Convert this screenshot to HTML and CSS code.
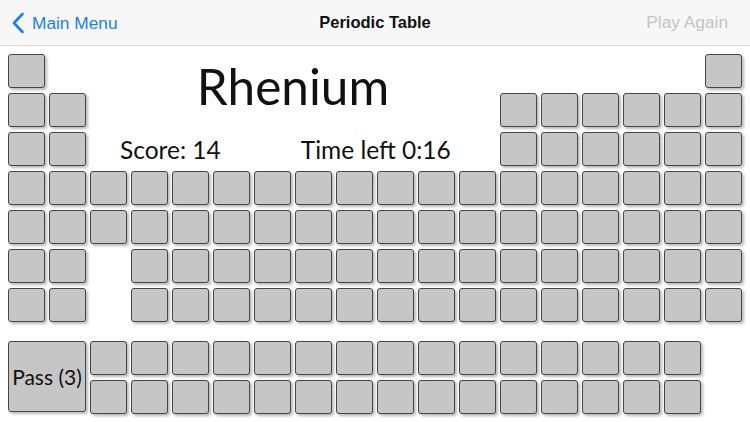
FILE: index.html
```html
<!DOCTYPE html>
<html>
<head>
<meta charset="utf-8">
<link rel="stylesheet" href="styles.css">
</head>
<body>
<header class="nav">
  <a class="nav-back"><svg class="chev" width="14" height="22" viewBox="0 0 14 22"><path d="M11.5 2 L3 11 L11.5 20" fill="none" stroke="#1a80f0" stroke-width="2.6" stroke-linecap="round" stroke-linejoin="round"/></svg><span>Main Menu</span></a>
  <div class="nav-title">Periodic Table</div>
  <a class="nav-action">Play Again</a>
</header>
<main class="board">
  <div class="element-name">Rhenium</div>
  <div class="stats"><span>Score: 14</span><span>Time left 0:16</span></div>
  <button class="pass">Pass (3)</button>

  <!-- row 1 -->
  <div class="cell"></div><div class="cell c18"></div>
  <!-- row 2 -->
  <div class="cell"></div><div class="cell"></div>
  <div class="cell c13"></div><div class="cell"></div><div class="cell"></div><div class="cell"></div><div class="cell"></div><div class="cell"></div>
  <!-- row 3 -->
  <div class="cell"></div><div class="cell"></div>
  <div class="cell c13"></div><div class="cell"></div><div class="cell"></div><div class="cell"></div><div class="cell"></div><div class="cell"></div>
  <!-- row 4 -->
  <div class="cell"></div><div class="cell"></div><div class="cell"></div><div class="cell"></div><div class="cell"></div><div class="cell"></div>
  <div class="cell"></div><div class="cell"></div><div class="cell"></div><div class="cell"></div><div class="cell"></div><div class="cell"></div>
  <div class="cell"></div><div class="cell"></div><div class="cell"></div><div class="cell"></div><div class="cell"></div><div class="cell"></div>
  <!-- row 5 -->
  <div class="cell"></div><div class="cell"></div><div class="cell"></div><div class="cell"></div><div class="cell"></div><div class="cell"></div>
  <div class="cell"></div><div class="cell"></div><div class="cell"></div><div class="cell"></div><div class="cell"></div><div class="cell"></div>
  <div class="cell"></div><div class="cell"></div><div class="cell"></div><div class="cell"></div><div class="cell"></div><div class="cell"></div>
  <!-- row 6 -->
  <div class="cell"></div><div class="cell"></div>
  <div class="cell c4"></div><div class="cell"></div><div class="cell"></div><div class="cell"></div><div class="cell"></div>
  <div class="cell"></div><div class="cell"></div><div class="cell"></div><div class="cell"></div><div class="cell"></div>
  <div class="cell"></div><div class="cell"></div><div class="cell"></div><div class="cell"></div><div class="cell"></div>
  <!-- row 7 -->
  <div class="cell"></div><div class="cell"></div>
  <div class="cell c4"></div><div class="cell"></div><div class="cell"></div><div class="cell"></div><div class="cell"></div>
  <div class="cell"></div><div class="cell"></div><div class="cell"></div><div class="cell"></div><div class="cell"></div>
  <div class="cell"></div><div class="cell"></div><div class="cell"></div><div class="cell"></div><div class="cell"></div>
  <!-- spacer -->
  <div class="spacer"></div>
  <!-- lanthanides -->
  <div class="cell c3"></div><div class="cell"></div><div class="cell"></div><div class="cell"></div><div class="cell"></div>
  <div class="cell"></div><div class="cell"></div><div class="cell"></div><div class="cell"></div><div class="cell"></div>
  <div class="cell"></div><div class="cell"></div><div class="cell"></div><div class="cell"></div><div class="cell"></div>
  <!-- actinides -->
  <div class="cell c3"></div><div class="cell"></div><div class="cell"></div><div class="cell"></div><div class="cell"></div>
  <div class="cell"></div><div class="cell"></div><div class="cell"></div><div class="cell"></div><div class="cell"></div>
  <div class="cell"></div><div class="cell"></div><div class="cell"></div><div class="cell"></div><div class="cell"></div>
</main>
</body>
</html>
```

FILE: styles.css
```css
html, body {
  margin: 0;
  padding: 0;
  background: #ffffff;
  width: 750px;
  height: 422px;
  overflow: hidden;
}

.nav {
  height: 45px;
  background: #f7f7f7;
  border-bottom: 1px solid #d9d9d9;
  display: flex;
  align-items: center;
  justify-content: space-between;
  padding: 0 22px 0 11px;
  font-family: "Liberation Sans", Arial, sans-serif;
  font-size: 17.3px;
  position: relative;
}

.nav-back {
  display: flex;
  align-items: center;
  gap: 7px;
  color: #1a80f0;
  padding-top: 1px;
}

.chev {
  display: block;
}

.nav-title {
  position: absolute;
  left: 0;
  right: 0;
  text-align: center;
  font-weight: bold;
  font-size: 16.5px;
  color: #111;
  pointer-events: none;
}

.nav-action {
  color: #c4c4c4;
}

.board {
  display: grid;
  grid-template-columns: repeat(18, 37px);
  grid-template-rows: repeat(7, 34px) 9px repeat(2, 34px);
  column-gap: 4px;
  row-gap: 5px;
  padding: 8px 0 0 8px;
  font-family: Lato, "Open Sans", sans-serif;
}

.cell {
  background: #c6c6c6;
  border: 1.5px solid #464646;
  border-radius: 3px;
  box-shadow: 2px 2px 3px rgba(0, 0, 0, 0.28);
  box-sizing: border-box;
}

.c3 { grid-column: 3; }
.c4 { grid-column: 4; }
.c13 { grid-column: 13; }
.c18 { grid-column: 18; }

.spacer {
  grid-column: 1 / -1;
}

.element-name {
  grid-column: 3 / 13;
  grid-row: 1 / 3;
  display: flex;
  justify-content: center;
  align-items: center;
  font-size: 49.5px;
  color: #111;
  padding-bottom: 10px;
}

.stats {
  grid-column: 3 / 13;
  grid-row: 3;
  display: flex;
  align-items: center;
  gap: 80px;
  padding-left: 30px;
  font-size: 24.5px;
  color: #111;
}

.pass {
  grid-column: 1 / 3;
  grid-row: 9 / 11;
  background: #c6c6c6;
  border: 1.5px solid #464646;
  border-radius: 3px;
  box-shadow: 2px 2px 3px rgba(0, 0, 0, 0.28);
  font-family: Lato, "Open Sans", sans-serif;
  font-size: 21px;
  color: #111;
  padding: 0;
  margin-bottom: 2px;
}
```
